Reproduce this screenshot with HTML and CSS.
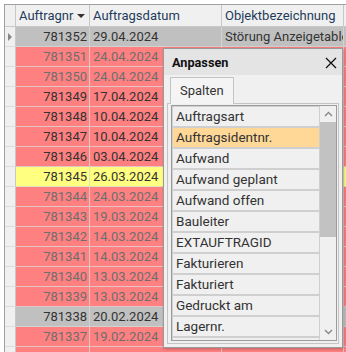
FILE: index.html
```html
<!DOCTYPE html>
<html lang="de">
<head>
	<title>Aufträge</title>
	<link rel="stylesheet" href="styles.css">
</head>
<body>

	<div class="grid">
		<div class="row head">
			<div class="ind"></div>
			<div class="cell sort"><span class="cap">Auftragnr.</span><span class="arrow"></span></div>
			<div class="cell">Auftragsdatum</div>
			<div class="cell">Objektbezeichnung</div>
			<div class="cell"></div>
		</div>

		<div class="row grey"><div class="ind"><span class="tri"></span></div><div class="cell num">781352</div><div class="cell">29.04.2024</div><div class="cell">Störung Anzeigetable</div><div class="cell"></div></div>
		<div class="row red dim"><div class="ind"></div><div class="cell num">781351</div><div class="cell">24.04.2024</div><div class="cell"></div><div class="cell"></div></div>
		<div class="row red dim"><div class="ind"></div><div class="cell num">781350</div><div class="cell">24.04.2024</div><div class="cell"></div><div class="cell"></div></div>
		<div class="row red"><div class="ind"></div><div class="cell num">781349</div><div class="cell">17.04.2024</div><div class="cell"></div><div class="cell"></div></div>
		<div class="row red"><div class="ind"></div><div class="cell num">781348</div><div class="cell">10.04.2024</div><div class="cell"></div><div class="cell"></div></div>
		<div class="row red"><div class="ind"></div><div class="cell num">781347</div><div class="cell">10.04.2024</div><div class="cell"></div><div class="cell"></div></div>
		<div class="row red"><div class="ind"></div><div class="cell num">781346</div><div class="cell">03.04.2024</div><div class="cell"></div><div class="cell"></div></div>
		<div class="row yellow"><div class="ind"></div><div class="cell num">781345</div><div class="cell">26.03.2024</div><div class="cell"></div><div class="cell"></div></div>
		<div class="row red dim"><div class="ind"></div><div class="cell num">781344</div><div class="cell">24.03.2024</div><div class="cell"></div><div class="cell"></div></div>
		<div class="row red dim"><div class="ind"></div><div class="cell num">781343</div><div class="cell">19.03.2024</div><div class="cell"></div><div class="cell"></div></div>
		<div class="row red dim"><div class="ind"></div><div class="cell num">781342</div><div class="cell">14.03.2024</div><div class="cell"></div><div class="cell"></div></div>
		<div class="row red dim"><div class="ind"></div><div class="cell num">781341</div><div class="cell">14.03.2024</div><div class="cell"></div><div class="cell"></div></div>
		<div class="row red dim"><div class="ind"></div><div class="cell num">781340</div><div class="cell">13.03.2024</div><div class="cell"></div><div class="cell"></div></div>
		<div class="row red dim"><div class="ind"></div><div class="cell num">781339</div><div class="cell">13.03.2024</div><div class="cell"></div><div class="cell"></div></div>
		<div class="row grey"><div class="ind"></div><div class="cell num">781338</div><div class="cell">20.02.2024</div><div class="cell"></div><div class="cell"></div></div>
		<div class="row red dim"><div class="ind"></div><div class="cell num">781337</div><div class="cell">19.02.2024</div><div class="cell"></div><div class="cell"></div></div>
		<div class="row red dim"><div class="ind"></div><div class="cell num"></div><div class="cell"></div><div class="cell"></div><div class="cell"></div></div>
	</div>

	<div class="dialog">
		<div class="dlg-head">
			<span class="dlg-title">Anpassen</span>
			<svg class="close" width="12" height="12" viewBox="0 0 12 12"><path d="M1 1L11 11M11 1L1 11" stroke="#111" stroke-width="1.3" fill="none"/></svg>
		</div>
		<div class="dlg-body">
			<div class="tabs"><div class="tab">Spalten</div></div>
			<div class="panel">
				<div class="list">
					<div class="items">
						<div class="item">Auftragsart</div>
						<div class="item sel">Auftragsidentnr.</div>
						<div class="item">Aufwand</div>
						<div class="item">Aufwand geplant</div>
						<div class="item">Aufwand offen</div>
						<div class="item">Bauleiter</div>
						<div class="item">EXTAUFTRAGID</div>
						<div class="item">Fakturieren</div>
						<div class="item">Fakturiert</div>
						<div class="item">Gedruckt am</div>
						<div class="item">Lagernr.</div>
						<div class="item"></div>
					</div>
					<div class="scroll">
						<svg class="sarrow" width="9" height="6" viewBox="0 0 9 6"><path d="M1 5L4.5 1.5L8 5" stroke="#888" stroke-width="1.4" fill="none"/></svg>
						<div class="thumb"></div>
						<div class="track"></div>
						<svg class="sarrow" width="9" height="6" viewBox="0 0 9 6"><path d="M1 1L4.5 4.5L8 1" stroke="#888" stroke-width="1.4" fill="none"/></svg>
					</div>
				</div>
			</div>
		</div>
	</div>

</body>
</html>
```

FILE: styles.css
```css
body {
	margin: 0;
	background-color: #fff;
	font-family: Roboto, "Liberation Sans", sans-serif;
	font-size: 13px;
	color: #333;
	overflow: hidden;
}
.grid{
	margin: 4px 0 0 4px;
	border-top: 1px solid #a0a0a0;
	border-left: 1px solid #a0a0a0;
	height: 347px;
	overflow: hidden;
}
.row{
	display: grid;
	grid-template-columns: 11px 74px 132px 122px 20px;
	height: 20px;
}
.cell, .ind{
	border-right: 1px solid #d6d6d6;
	border-bottom: 1px solid #d6d6d6;
	padding: 0 3px;
	line-height: 19px;
	white-space: nowrap;
	overflow: hidden;
}
.ind{
	padding: 0;
	background-color: #f0f0f0;
	border-right-color: #c8c8c8;
	border-bottom-color: #dcdcdc;
	position: relative;
}
.tri{
	position: absolute;
	left: 3px;
	top: 6px;
	border-left: 4px solid #888;
	border-top: 4px solid transparent;
	border-bottom: 4px solid transparent;
}
.head{
	height: 22px;
	background-color: #f0f0f0;
}
.head .cell{
	line-height: 21px;
	border-bottom-color: #c8c8c8;
	border-right-color: #c8c8c8;
	color: #1e3c5a;
}
.head .ind{
	border-bottom-color: #c8c8c8;
}
.sort{
	display: flex;
	align-items: center;
}
.cap{
	width: 55px;
	flex: none;
	overflow: hidden;
}
.arrow{
	margin-left: 3px;
	border-top: 4px solid #333;
	border-left: 4px solid transparent;
	border-right: 4px solid transparent;
}
.num{
	text-align: right;
	padding-right: 2px;
}
.grey .cell{
	background-color: #c0c0c0;
	border-color: #d2d2d2;
}
.red .cell{
	background-color: #ff8080;
	border-color: #e4c4c4;
}
.yellow .cell{
	background-color: #ffff80;
	border-color: #e0e0c0;
}
.dim .cell{
	color: #6e6e6e;
}

.dialog{
	position: absolute;
	left: 163px;
	top: 48px;
	width: 178px;
	height: 298px;
	border: 1px solid #9a9a9a;
	background-color: #f0f0f0;
	box-shadow: 1px 1px 3px rgba(0,0,0,0.25);
	display: flex;
	flex-direction: column;
}
.dlg-head{
	flex: none;
	display: flex;
	align-items: center;
	justify-content: space-between;
	height: 26px;
	padding: 0 5px 0 8px;
	background-color: #e4e4e4;
}
.dlg-title{
	font-weight: bold;
	font-size: 12.7px;
	color: #111;
}
.close{
	margin-top: 1px;
}
.dlg-body{
	flex: 1;
	min-height: 0;
	padding: 2px 3px 3px 3px;
	display: flex;
	flex-direction: column;
}
.tabs{
	flex: none;
	display: flex;
	padding-left: 3px;
}
.tab{
	border: 1px solid #c4c4c4;
	border-bottom: none;
	background-color: #f4f4f4;
	padding: 0 9px;
	height: 26px;
	line-height: 25px;
	color: #333;
	margin-bottom: -1px;
	position: relative;
}
.panel{
	flex: 1;
	min-height: 0;
	border: 1px solid #c4c4c4;
	padding: 1px 1px 2px 3px;
	display: flex;
}
.list{
	flex: 1;
	border: 1px solid #9c9c9c;
	display: flex;
	overflow: hidden;
}
.items{
	flex: 1;
	background-color: #cfcfcf;
	overflow: hidden;
}
.item{
	height: 19px;
	line-height: 19px;
	margin: 1px 1px 2px 1px;
	padding-left: 3px;
	background-color: #f0f0f0;
	font-size: 13.5px;
	color: #333;
	white-space: nowrap;
}
.sel{
	background-color: #ffd898;
}
.scroll{
	width: 16px;
	background-color: #f0f0f0;
	display: flex;
	flex-direction: column;
	align-items: center;
}
.sarrow{
	margin: 5px 0;
	flex: none;
}
.thumb{
	width: 16px;
	height: 115px;
	flex: none;
	background-color: #c2c2c2;
}
.track{
	flex: 1;
}
```
